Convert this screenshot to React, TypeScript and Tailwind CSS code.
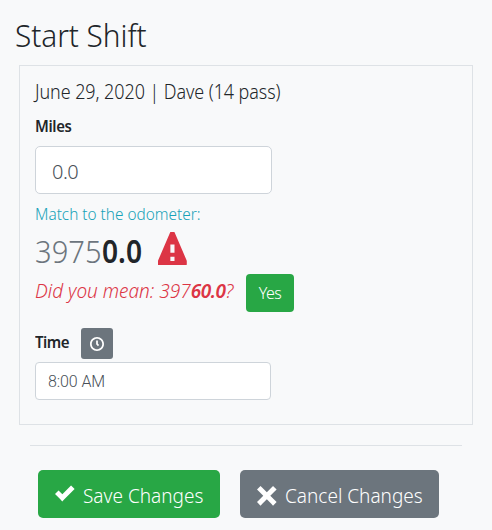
import React from "react";

const icons = {
  check: "M6.41 1l-.69.72-2.78 2.78-.81-.78-.72-.72-1.41 1.41.72.72 1.5 1.5.69.72.72-.72 3.5-3.5.72-.72-1.41-1.41z",
  x: "M1.41 0l-1.41 1.41.72.72 1.78 1.81-1.78 1.78-.72.69 1.41 1.44.72-.72 1.81-1.81 1.78 1.81.69.72 1.44-1.44-.72-.69-1.81-1.78 1.81-1.81.72-.72-1.44-1.41-.69.72-1.78 1.78-1.81-1.78-.72-.72z",
  warning: "M3.09 0c-.06 0-.1.04-.13.09l-2.94 6.81c-.02.05-.03.13-.03.19v.81c0 .05.04.09.09.09h6.81c.05 0 .09-.04.09-.09v-.81c0-.05-.01-.14-.03-.19l-2.94-6.81c-.02-.05-.07-.09-.13-.09h-.81zm-.09 3h1v2h-1v-2zm0 3h1v1h-1v-1z",
  clock: "M4 0c-2.2 0-4 1.8-4 4s1.8 4 4 4 4-1.8 4-4-1.8-4-4-4zm0 1c1.66 0 3 1.34 3 3s-1.34 3-3 3-3-1.34-3-3 1.34-3 3-3zm-.5 1v2.22l.16.13.5.5.34.38.72-.72-.38-.34-.34-.34v-1.81h-1z",
};

function Icon({ name, className }: { name: keyof typeof icons; className: string }) {
  return (
    <svg viewBox="0 0 8 8" fill="currentColor" className={`shrink-0 ${className}`}>
      <path d={icons[name]} />
    </svg>
  );
}

export default function App() {
  return (
    <main className="h-[530px] w-[492px] overflow-hidden bg-[#f8f9fa] pt-4 font-['Noto_Sans','Open_Sans',sans-serif] font-[350] whitespace-nowrap text-[#212529]">
      <h1 className="ml-[15px] h-[49px] origin-left scale-x-[.93] text-[32px] leading-[38px] tracking-[-0.05px]">Start Shift</h1>
      <section className="ml-[19px] h-[360px] w-[454px] border border-[#dee2e6] px-[15px] pt-[11px]">
        <h2 className="h-[37px] origin-left scale-x-[.92] text-[19.5px] leading-[29px] tracking-[-0.07px]">June 29, 2020 | Dave (14 pass)</h2>
        <label htmlFor="miles" className="block h-8 origin-left scale-x-[.93] text-[16px] leading-[25px] font-semibold tracking-[-0.4px]">Miles</label>
        <input id="miles" defaultValue="0.0" className="block h-12 w-[237px] rounded-[5px] border border-[#ced4da] bg-white px-4 pt-[3px] text-[20px] tracking-[-0.5px] text-[#495057] outline-none" />
        <p className="mt-2 origin-left scale-x-[.96] text-[16px] leading-[25px] text-[#17a2b8]">Match to the odometer:</p>
        <div className="flex h-[47px] items-start text-[32px] leading-[47px]">
          <span className="w-[67px]"><span className="inline-block origin-left scale-x-[.91] text-[#6c757d]">3975</span></span>
          <strong className="w-[56px]"><span className="inline-block origin-left scale-x-[.88] font-semibold">0.0</span></strong>
          <Icon name="warning" className="mt-[5px] size-[33px] text-[#dc3545]" />
        </div>
        <div className="flex h-[38px] items-center text-[20px] text-[#dc3545] italic">
          <p className="w-[211px] origin-left scale-x-[.95] pb-1">Did you mean: 397<strong className="font-semibold tracking-[-0.5px]">60.0</strong>?</p>
          <button className="h-[38px] w-12 rounded bg-[#28a745] text-[16px] tracking-[-0.5px] text-white not-italic">Yes</button>
        </div>
        <div className="mt-4 flex h-[31px] items-center">
          <label htmlFor="time" className="w-[46px] origin-left scale-x-[.94] pb-1 text-[16px] font-semibold tracking-[-0.5px]">Time</label>
          <button aria-label="Set current time" className="flex h-[31px] w-8 items-center justify-center rounded-[3px] bg-[#6c757d] text-white">
            <Icon name="clock" className="size-3.5" />
          </button>
        </div>
        <input id="time" defaultValue="8:00 AM" className="mt-[3px] block h-[38px] w-[236px] rounded border border-[#ced4da] bg-white px-3 pt-px font-[Roboto,sans-serif] text-[16px] tracking-[-0.1px] text-[#495057] outline-none" />
      </section>
      <hr className="mt-5 ml-[30px] w-[432px] border-[#dee2e6]" />
      <div className="mt-6 ml-[38px] flex gap-5 text-[20px] text-white">
        <button className="flex h-12 w-[182px] items-center rounded-[5px] bg-[#28a745] pl-[17px]">
          <Icon name="check" className="mr-2 mb-0.5 size-5" />
          <span className="origin-left scale-x-[.95] pt-[3px]">Save Changes</span>
        </button>
        <button className="flex h-12 w-[199px] items-center rounded-[5px] bg-[#6c757d] pl-[17px]">
          <Icon name="x" className="mt-1 mr-2 size-5" />
          <span className="origin-left scale-x-[.95] pt-[3px]">Cancel Changes</span>
        </button>
      </div>
    </main>
  );
}
